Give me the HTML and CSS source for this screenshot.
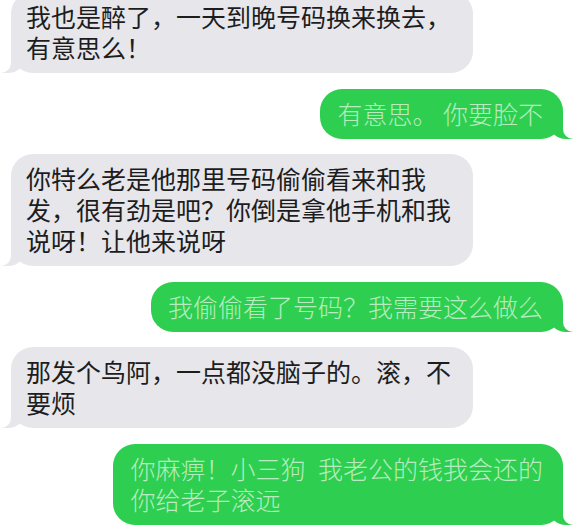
FILE: index.html
```html
<!DOCTYPE html>
<html lang="zh-CN">
<head>
<meta charset="utf-8">
<title>聊天记录</title>
<link rel="stylesheet" href="styles.css">
</head>
<body>
<div class="chat">
  <div class="bubble them first">我也是醉了，一天到晚号码换来换去，有意思么！</div>
  <div class="bubble me">有意思。 你要脸不</div>
  <div class="bubble them">你特么老是他那里号码偷偷看来和我发，很有劲是吧？你倒是拿他手机和我说呀！让他来说呀</div>
  <div class="bubble me">我偷偷看了号码？我需要这么做么</div>
  <div class="bubble them">那发个鸟阿，一点都没脑子的。滚，不要烦</div>
  <div class="bubble me">你麻痹！小三狗&ensp;我老公的钱我会还的<br>你给老子滚远</div>
</div>
</body>
</html>
```
FILE: styles.css
```css
html, body {
  margin: 0;
  padding: 0;
  background: #ffffff;
}

body {
  width: 584px;
  height: 529px;
  overflow: hidden;
  font-family: "Noto Sans CJK SC", "Noto Sans", sans-serif;
}

.chat {
  display: flex;
  flex-direction: column;
  gap: 15.5px;
}

.bubble {
  position: relative;
  box-sizing: border-box;
  font-size: 25px;
  line-height: 31px;
  border-radius: 22px;
  padding: 9px 20px 10px 15px;
}

.bubble.first {
  margin-top: -8px;
}

.them {
  align-self: flex-start;
  margin-left: 11px;
  width: 462px;
  background: #e6e6eb;
  color: #1d1d1d;
}

.me {
  align-self: flex-end;
  margin-right: 21px;
  padding: 9px 20px 10px 17px;
  background: #2ecf50;
  color: #b6ecbf;
  font-weight: 300;
}

.bubble::before,
.bubble::after {
  content: "";
  position: absolute;
  bottom: 0;
  height: 25px;
}

.them::before {
  left: -10px;
  width: 23px;
  background: #e6e6eb;
  border-bottom-right-radius: 16px 14px;
}

.them::after {
  left: -26px;
  width: 26px;
  background: #ffffff;
  border-bottom-right-radius: 10px;
}

.me::before {
  right: -10px;
  width: 23px;
  background: #2ecf50;
  border-bottom-left-radius: 16px 14px;
}

.me::after {
  right: -26px;
  width: 26px;
  background: #ffffff;
  border-bottom-left-radius: 10px;
}
```
